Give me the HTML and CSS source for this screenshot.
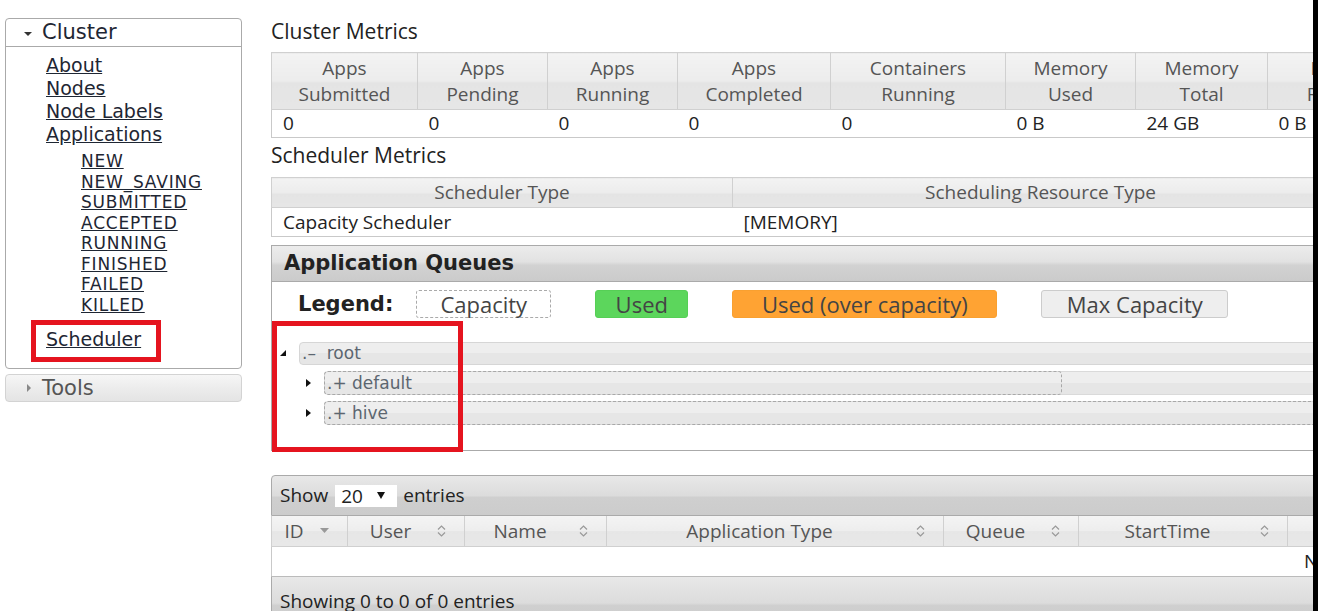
FILE: index.html
```html
<!DOCTYPE html>
<html>
<head>
<meta charset="utf-8">
<title>All Applications</title>
<link rel="stylesheet" href="styles.css">
</head>
<body>
<div class="page">
  <aside class="nav">
    <div class="nav-box">
      <div class="nav-head"><span class="tri-down"></span>Cluster</div>
      <ul class="links">
        <li><a href="#">About</a></li>
        <li><a href="#">Nodes</a></li>
        <li><a href="#">Node Labels</a></li>
        <li><a href="#">Applications</a>
          <ul class="states">
            <li><a href="#">NEW</a></li>
            <li><a href="#">NEW_SAVING</a></li>
            <li><a href="#">SUBMITTED</a></li>
            <li><a href="#">ACCEPTED</a></li>
            <li><a href="#">RUNNING</a></li>
            <li><a href="#">FINISHED</a></li>
            <li><a href="#">FAILED</a></li>
            <li><a href="#">KILLED</a></li>
          </ul>
        </li>
        <li class="sched-link"><a href="#">Scheduler</a></li>
      </ul>
      <span class="mark mark-sched"></span>
    </div>
    <div class="nav-tools"><span class="tri-right"></span>Tools</div>
  </aside>

  <main class="main">
    <div class="inner">
      <h2 class="title">Cluster Metrics</h2>
      <table class="grid metrics">
        <colgroup>
          <col class="c146"><col class="c130"><col class="c130"><col class="c153"><col class="c175"><col class="c130"><col class="c132"><col class="c160"><col class="c130"><col class="c130">
        </colgroup>
        <thead>
          <tr>
            <th>Apps<br>Submitted</th>
            <th>Apps<br>Pending</th>
            <th>Apps<br>Running</th>
            <th>Apps<br>Completed</th>
            <th>Containers<br>Running</th>
            <th>Memory<br>Used</th>
            <th>Memory<br>Total</th>
            <th>Memory<br>Reserved</th>
            <th>VCores<br>Used</th>
            <th>VCores<br>Total</th>
          </tr>
        </thead>
        <tbody>
          <tr>
            <td>0</td><td>0</td><td>0</td><td>0</td><td>0</td><td>0 B</td><td>24 GB</td><td>0 B</td><td>0</td><td>24</td>
          </tr>
        </tbody>
      </table>

      <h2 class="title title-2">Scheduler Metrics</h2>
      <table class="grid schedt">
        <colgroup><col class="c461"><col class="c616"><col class="c300"></colgroup>
        <thead>
          <tr><th>Scheduler Type</th><th>Scheduling Resource Type</th><th>Minimum Allocation</th></tr>
        </thead>
        <tbody>
          <tr><td>Capacity Scheduler</td><td>[MEMORY]</td><td>&lt;memory:1024, vCores:1&gt;</td></tr>
        </tbody>
      </table>

      <section class="queues">
        <div class="q-head">Application Queues</div>
        <div class="legend">
          <span class="lg-label">Legend:</span>
          <span class="lg lg-cap">Capacity</span>
          <span class="lg lg-used">Used</span>
          <span class="lg lg-over">Used (over capacity)</span>
          <span class="lg lg-max">Max Capacity</span>
        </div>
        <ul class="tree">
          <li>
            <div class="row root-row">
              <span class="ico"><svg width="6" height="6" viewBox="0 0 6 6"><path d="M6 0V6H0Z" fill="#111"/></svg></span>
              <div class="qbar"><span class="qlabel">.–  root</span></div>
            </div>
            <ul class="children">
              <li class="row child-row">
                <span class="ico"><svg width="5" height="8" viewBox="0 0 5 8"><path d="M0 0L5 4L0 8Z" fill="#111"/></svg></span>
                <div class="qbar"><span class="cap" style="width:738px"><span class="qlabel">.+ default</span></span></div>
              </li>
              <li class="row child-row">
                <span class="ico"><svg width="5" height="8" viewBox="0 0 5 8"><path d="M0 0L5 4L0 8Z" fill="#111"/></svg></span>
                <div class="qbar"><span class="cap" style="width:1060px"><span class="qlabel">.+ hive</span></span></div>
              </li>
            </ul>
          </li>
        </ul>
        <span class="mark mark-tree"></span>
      </section>

      <div class="apps">
        <div class="dt-top">Show <span class="select">20<svg width="8" height="7" viewBox="0 0 8 7"><path d="M0 0H8L4 7Z" fill="#111"/></svg></span> entries</div>
        <table class="grid appst">
          <colgroup>
            <col class="c76"><col class="c117"><col class="c142"><col class="c337"><col class="c135"><col class="c209"><col class="c209"><col class="c120"><col class="c150"><col class="c160"><col class="c170"><col class="c170"><col class="c140"><col class="c153">
          </colgroup>
          <thead>
            <tr>
              <th><div class="thc"><span class="lbl">ID</span><svg class="sort" width="9" height="6" viewBox="0 0 9 6"><path d="M0 0H9L4.5 5Z" fill="#999"/></svg></div></th>
              <th><div class="thc"><span class="lbl">User</span><svg class="sort" width="9" height="12" viewBox="0 0 9 12"><path d="M1 4.5L4.5 1L8 4.5M1 7.5L4.5 11L8 7.5" fill="none" stroke="#999" stroke-width="1.2"/></svg></div></th>
              <th><div class="thc"><span class="lbl">Name</span><svg class="sort" width="9" height="12" viewBox="0 0 9 12"><path d="M1 4.5L4.5 1L8 4.5M1 7.5L4.5 11L8 7.5" fill="none" stroke="#999" stroke-width="1.2"/></svg></div></th>
              <th><div class="thc"><span class="lbl">Application Type</span><svg class="sort" width="9" height="12" viewBox="0 0 9 12"><path d="M1 4.5L4.5 1L8 4.5M1 7.5L4.5 11L8 7.5" fill="none" stroke="#999" stroke-width="1.2"/></svg></div></th>
              <th><div class="thc"><span class="lbl">Queue</span><svg class="sort" width="9" height="12" viewBox="0 0 9 12"><path d="M1 4.5L4.5 1L8 4.5M1 7.5L4.5 11L8 7.5" fill="none" stroke="#999" stroke-width="1.2"/></svg></div></th>
              <th><div class="thc"><span class="lbl">StartTime</span><svg class="sort" width="9" height="12" viewBox="0 0 9 12"><path d="M1 4.5L4.5 1L8 4.5M1 7.5L4.5 11L8 7.5" fill="none" stroke="#999" stroke-width="1.2"/></svg></div></th>
              <th><div class="thc"><span class="lbl">FinishTime</span><svg class="sort" width="9" height="12" viewBox="0 0 9 12"><path d="M1 4.5L4.5 1L8 4.5M1 7.5L4.5 11L8 7.5" fill="none" stroke="#999" stroke-width="1.2"/></svg></div></th>
              <th><div class="thc"><span class="lbl">State</span></div></th>
              <th><div class="thc"><span class="lbl">FinalStatus</span></div></th>
              <th><div class="thc"><span class="lbl">Containers</span></div></th>
              <th><div class="thc"><span class="lbl">CPU VCores</span></div></th>
              <th><div class="thc"><span class="lbl">Memory MB</span></div></th>
              <th><div class="thc"><span class="lbl">Progress</span></div></th>
              <th><div class="thc"><span class="lbl">Tracking UI</span></div></th>
            </tr>
          </thead>
          <tbody>
            <tr><td class="empty" colspan="14">No data available in table</td></tr>
          </tbody>
        </table>
        <div class="dt-foot">Showing 0 to 0 of 0 entries</div>
      </div>
    </div>
  </main>
  <div class="edge"></div>
</div>
</body>
</html>
```

FILE: styles.css
```css
html, body {
  margin: 0;
  padding: 0;
  height: 611px;
  overflow: hidden;
  background: #fff;
}

.page {
  display: flex;
  align-items: flex-start;
  height: 611px;
}

/* ---------- sidebar ---------- */
.nav {
  width: 237px;
  margin: 18px 0 0 5px;
  flex: none;
  font-family: "DejaVu Sans", Verdana, sans-serif;
}

.nav-box {
  position: relative;
  border: 1px solid #aaa;
  border-radius: 4px;
  background: #fff;
}

.nav-head {
  height: 27px;
  line-height: 27px;
  border-bottom: 1px solid #aaa;
  font-size: 21px;
  color: #1e2633;
  display: flex;
  align-items: center;
  padding-left: 18px;
}

.tri-down {
  width: 0;
  height: 0;
  border-left: 4px solid transparent;
  border-right: 4px solid transparent;
  border-top: 4px solid #333;
  margin-right: 10px;
  margin-top: 2px;
}

.links {
  list-style: none;
  margin: 0;
  padding: 7px 0 17px 40px;
  font-size: 19px;
  line-height: 23px;
}

.links a {
  color: #1e2633;
  text-decoration: underline;
}

.states {
  list-style: none;
  margin: 5px 0 0 0;
  padding: 0 0 0 35px;
  font-size: 17px;
  line-height: 20.5px;
  letter-spacing: 0.8px;
}

.sched-link {
  margin-top: 13px;
}

.mark {
  position: absolute;
  border: 5px solid #e5141f;
  box-sizing: border-box;
  pointer-events: none;
}

.mark-sched {
  left: 25px;
  top: 301px;
  width: 130px;
  height: 42px;
}

.nav-tools {
  margin-top: 5px;
  height: 26px;
  line-height: 26px;
  border: 1px solid #d3d3d3;
  border-radius: 4px;
  background: linear-gradient(#f6f6f6, #ececec 50%, #e4e4e4);
  font-size: 21px;
  color: #555;
  display: flex;
  align-items: center;
  padding-left: 21px;
}

.tri-right {
  width: 0;
  height: 0;
  border-top: 4px solid transparent;
  border-bottom: 4px solid transparent;
  border-left: 4px solid #888;
  margin-right: 11px;
}

/* ---------- main ---------- */
.main {
  flex: none;
  width: 1042px;
  margin-left: 29px;
  height: 611px;
  overflow: hidden;
  font-family: "Open Sans", "Liberation Sans", sans-serif;
  color: #222;
}

.inner {
  width: 2400px;
}

.title {
  margin: 0;
  padding-top: 16px;
  font-size: 21px;
  font-weight: normal;
  line-height: 30px;
  color: #222;
}

.title-2 {
  padding-top: 2px;
}

.grid {
  border-collapse: collapse;
  table-layout: fixed;
  margin-top: 6px;
  font-size: 19px;
}

.grid th {
  font-weight: normal;
  color: #555;
  background: linear-gradient(#f3f3f3, #ececec 50%, #e4e4e4 52%, #e6e6e6);
  border: 1px solid #d0d0d0;
  padding: 3px 4px;
  line-height: 25px;
  text-align: center;
  white-space: nowrap;
  overflow: hidden;
}

.grid td {
  border: 1px solid #c9c9c9;
  border-top: none;
  border-right: none;
  padding: 0 11px;
  line-height: 27px;
  height: 27px;
  white-space: nowrap;
  overflow: hidden;
}

.metrics td {
  border-left: none;
}

.metrics td:first-child,
.schedt td:first-child {
  border-left: 1px solid #c9c9c9;
}

.metrics th {
  padding: 2px 4px;
  line-height: 26px;
}

.schedt {
  margin-top: 7px;
}

.schedt th {
  padding: 1px 4px 2px;
  line-height: 26px;
}

.schedt td {
  border-left: none;
  line-height: 28px;
  height: 28px;
}

.c76 { width: 76px; }
.c117 { width: 117px; }
.c120 { width: 120px; }
.c130 { width: 130px; }
.c132 { width: 132px; }
.c135 { width: 135px; }
.c140 { width: 140px; }
.c142 { width: 142px; }
.c146 { width: 146px; }
.c150 { width: 150px; }
.c153 { width: 153px; }
.c160 { width: 160px; }
.c170 { width: 170px; }
.c175 { width: 175px; }
.c209 { width: 209px; }
.c300 { width: 300px; }
.c337 { width: 337px; }
.c461 { width: 461px; }
.c616 { width: 616px; }

/* ---------- queues ---------- */
.queues {
  position: relative;
  width: 1300px;
  margin-top: 8px;
  border: 1px solid #aaa;
  padding-bottom: 22px;
}

.q-head {
  height: 35px;
  line-height: 35px;
  border-bottom: 1px solid #aaa;
  background: linear-gradient(#ececec, #e2e2e2 45%, #d2d2d2 55%, #cbcbcb);
  font-family: "DejaVu Sans", Verdana, sans-serif;
  font-weight: bold;
  font-size: 21px;
  color: #222;
  padding-left: 12px;
}

.legend {
  display: flex;
  align-items: center;
  margin-top: 8px;
  height: 28px;
  padding-left: 26px;
  font-size: 22px;
  color: #444;
}

.lg-label {
  font-family: "DejaVu Sans", Verdana, sans-serif;
  font-weight: bold;
  font-size: 21px;
  color: #222;
  margin-right: 23px;
}

.lg {
  box-sizing: border-box;
  height: 28px;
  line-height: 26px;
  text-align: center;
  border-radius: 3px;
  margin-right: 44px;
}

.lg-cap {
  width: 135px;
  border: 1px dashed #aaa;
  background: #fff;
}

.lg-used {
  width: 93px;
  border: 1px solid #56cf56;
  background: #5cd65c;
}

.lg-over {
  width: 265px;
  border: 1px solid #f9a030;
  background: #ffa333;
}

.lg-max {
  width: 187px;
  border: 1px solid #ccc;
  background: #eee;
}

.tree,
.children {
  list-style: none;
  margin: 0;
  padding: 0;
}

.tree {
  margin-top: 20px;
  font-family: "DejaVu Sans", Verdana, sans-serif;
  font-size: 17px;
  color: #5c6670;
}

.row {
  display: flex;
  align-items: center;
  height: 30px;
}

.root-row .ico {
  width: 27px;
  padding-left: 8px;
  box-sizing: border-box;
  display: flex;
  align-items: center;
}

.child-row {
  padding-left: 27px;
}

.child-row .ico {
  width: 25px;
  padding-left: 7px;
  box-sizing: border-box;
  display: flex;
  align-items: center;
}

.qbar {
  flex: 1;
  box-sizing: border-box;
  height: 23px;
  border: 1px solid #d6d6d6;
  border-radius: 4px;
  background: linear-gradient(#eeeeee 50%, #e6e6e6 50%);
  display: flex;
  align-items: stretch;
}

.root-row .qbar {
  padding-left: 2px;
}

.child-row .qbar {
  height: 24px;
  border-color: #dadada;
}

.cap {
  box-sizing: border-box;
  border: 1px dashed #a8a8a8;
  border-radius: 4px;
  margin: -1px 0 -1px -1px;
  padding-left: 2px;
  display: flex;
  align-items: center;
}

.qlabel {
  line-height: 21px;
  white-space: pre;
}

.mark-tree {
  left: 0;
  top: 75px;
  width: 191px;
  height: 131px;
}

/* ---------- apps table ---------- */
.apps {
  width: 2288px;
  margin-top: 24px;
  font-size: 19px;
}

.dt-top {
  height: 39px;
  line-height: 39px;
  border: 1px solid #aaa;
  border-radius: 4px 4px 0 0;
  background: linear-gradient(#e8e8e8, #dcdcdc 50%, #cfcfcf 55%, #cccccc);
  padding-left: 8px;
  display: flex;
  align-items: center;
  color: #222;
}

.select {
  display: flex;
  align-items: center;
  justify-content: space-between;
  box-sizing: border-box;
  width: 62px;
  height: 22px;
  line-height: 22px;
  background: #fff;
  margin: 0 6px 0 7px;
  padding: 0 12px 0 6px;
}

.appst {
  width: 2288px;
  margin-top: 0;
}

.appst th {
  padding: 0;
  line-height: 30px;
  border-top: none;
  background: linear-gradient(#f4f4f4, #ededed 50%, #e6e6e6 52%, #e8e8e8);
}

.thc {
  display: flex;
  align-items: center;
}

.lbl {
  flex: 1;
  text-align: center;
}

.sort {
  flex: none;
  margin: 0 18px 0 4px;
}

.appst td.empty {
  text-align: center;
  color: #222;
  height: 29px;
  line-height: 29px;
  border-left: 1px solid #c9c9c9;
  border-bottom: 1px solid #bbb;
}

.dt-foot {
  height: 40px;
  line-height: 24px;
  padding: 12px 0 0 8px;
  border: 1px solid #aaa;
  border-top: none;
  background: linear-gradient(#e8e8e8, #dcdcdc 50%, #cfcfcf 55%, #cccccc);
  color: #222;
}

.edge {
  flex: none;
  width: 5px;
  height: 611px;
  background: #000;
}
```
